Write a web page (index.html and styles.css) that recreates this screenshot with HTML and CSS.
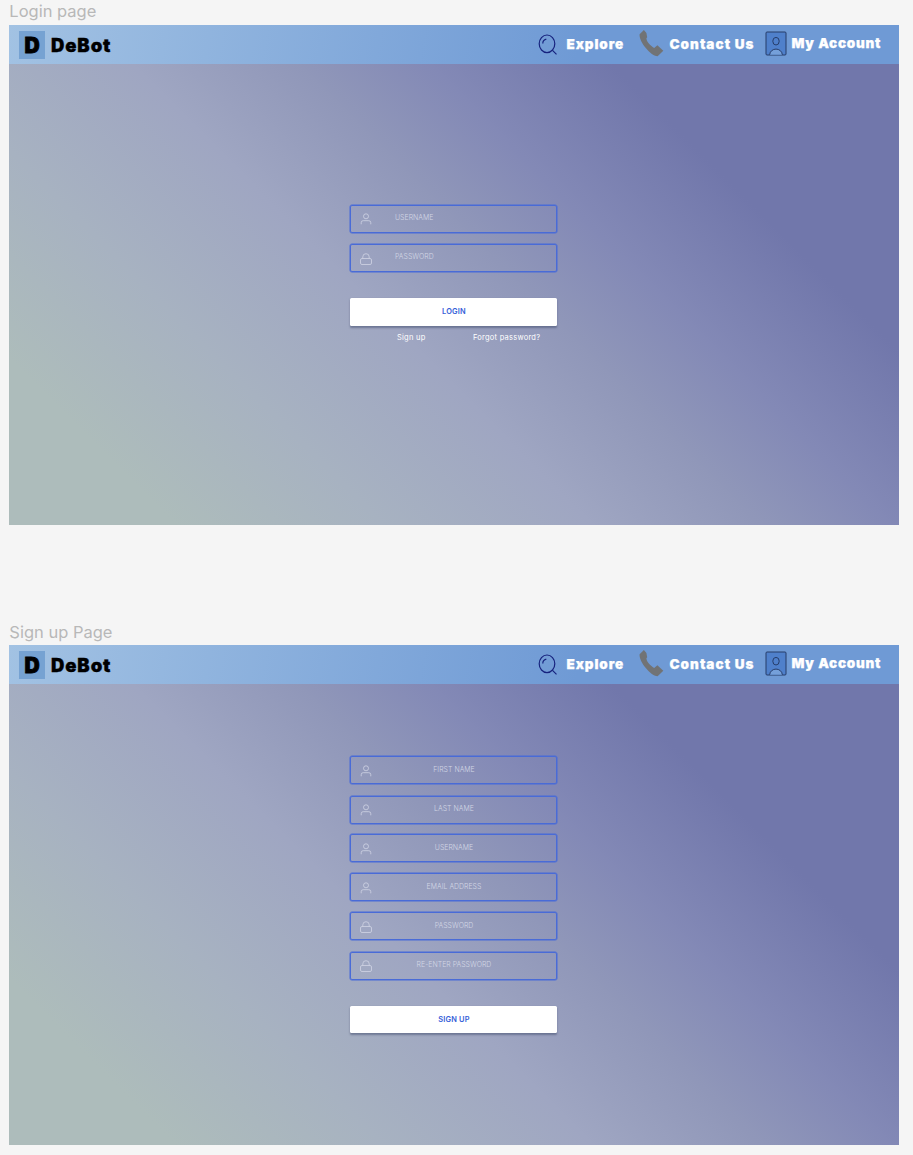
FILE: index.html
```
<!DOCTYPE html>
<html lang="en">
<head>
<meta charset="utf-8">
<title>DeBot</title>
<link rel="stylesheet" href="styles.css">
</head>
<body>
<svg class="defs" width="0" height="0">
  <symbol id="search" viewBox="0 0 20 22"><ellipse cx="9" cy="9.8" rx="7.8" ry="8.8"/><path d="M14.5 16.3l4 4M4.8 9.4c0-2.4 1.2-3.6 3.5-4.2"/></symbol>
  <symbol id="phone" viewBox="0 0 25 28"><path d="M4.900.9L.6 5.200C.2 9 3 14.500 7 19.300 10.500 23.500 14.500 27 18.600 27.200L24.300 21.700 18.400 16.200 15.200 18.900C13.400 18.500 8.300 13.400 7.700 11L7.400 9.300 8.200 8.300 7.400 4Z"/></symbol>
  <symbol id="account" viewBox="0 0 22 25"><rect class="card" x="1" y="1" width="20" height="23" rx="1"/><ellipse cx="11" cy="10.200" rx="3.200" ry="3.800"/><path class="shoulders" d="M4.600 23.800c.8-7.600 12-7.600 12.800 0"/></symbol>
  <symbol id="user" viewBox="0 0 12 12"><circle cx="6" cy="3.300" r="2.500"/><path d="M1.200 11.300V9.700q0-2 2-2h5.600q2 0 2 2v1.600"/></symbol>
  <symbol id="lock" viewBox="0 0 12 12"><rect x=".5" y="5.500" width="11" height="6" rx="1.500"/><path d="M2.800 5.500V3.900a3.200 3.200 0 0 1 6.400 0v1.600"/></symbol>
</svg>
<section class="frame-wrap">
  <h2 class="frame-name">Login page</h2>
  <main class="frame">
    <header class="bar">
      <span class="logo">D</span><span class="brand">DeBot</span>
      <nav class="nav">
        <svg class="i-search"><use href="#search"/></svg><a class="explore">Explore</a>
        <svg class="i-phone"><use href="#phone"/></svg><a class="contact">Contact Us</a>
        <svg class="i-account"><use href="#account"/></svg><a class="my">My Account</a>
      </nav>
    </header>
    <form class="form login">
      <label class="field"><svg class="icon"><use href="#user"/></svg><span class="hint">USERNAME</span></label>
      <label class="field"><svg class="icon"><use href="#lock"/></svg><span class="hint">PASSWORD</span></label>
      <button class="submit" type="button">LOGIN</button>
      <div class="links"><a class="signup-link">Sign up</a><a class="forgot">Forgot password?</a></div>
    </form>
  </main>
</section>
<section class="frame-wrap last">
  <h2 class="frame-name">Sign up Page</h2>
  <main class="frame">
    <header class="bar">
      <span class="logo">D</span><span class="brand">DeBot</span>
      <nav class="nav">
        <svg class="i-search"><use href="#search"/></svg><a class="explore">Explore</a>
        <svg class="i-phone"><use href="#phone"/></svg><a class="contact">Contact Us</a>
        <svg class="i-account"><use href="#account"/></svg><a class="my">My Account</a>
      </nav>
    </header>
    <form class="form signup">
      <label class="field"><svg class="icon"><use href="#user"/></svg><span class="hint">FIRST NAME</span></label>
      <label class="field"><svg class="icon"><use href="#user"/></svg><span class="hint">LAST NAME</span></label>
      <label class="field"><svg class="icon"><use href="#user"/></svg><span class="hint">USERNAME</span></label>
      <label class="field"><svg class="icon"><use href="#user"/></svg><span class="hint">EMAIL ADDRESS</span></label>
      <label class="field"><svg class="icon"><use href="#lock"/></svg><span class="hint">PASSWORD</span></label>
      <label class="field"><svg class="icon"><use href="#lock"/></svg><span class="hint">RE-ENTER PASSWORD</span></label>
      <button class="submit" type="button">SIGN UP</button>
    </form>
  </main>
</section>
</body>
</html>
```
FILE: styles.css
```
* { box-sizing: border-box; }
body { margin: 0; background: #f5f5f5; font-family: Inter, sans-serif; height: 1155px; }
.defs { display: block; height: 0; }
.frame-wrap { padding-left: 9.300px; height: 620.300px; }
.frame-wrap.last { height: 534px; }
.frame-name { margin: 0; height: 24.500px; font-size: 16.500px; line-height: 22px; font-weight: 400; color: #b8b8b8; white-space: nowrap; }
.last .frame-name { padding-top: 1px; }
.frame { width: 889.400px; height: 500px; background: linear-gradient(45deg, #adbcbb 12%, #a7b2c1 27%, #9fa6c2 42%, #9097b9 54%, #8389b6 63.500%, #7177ab 76.5%); }
.bar { height: 39px; padding-left: 9.700px; display: flex; align-items: flex-start; background: linear-gradient(100deg, #a2c2e3, #6f9ad5 64%); color: #000; font-weight: 900; }
.logo { width: 26px; height: 28px; margin-top: 6.500px; background: #76a2d2; text-align: center; font-size: 21px; line-height: 29px; -webkit-text-stroke: .8px #000; }
.brand { margin: 8px 0 0 6px; font-size: 18.500px; line-height: 24px; letter-spacing: .9px; -webkit-text-stroke: .3px #000; }
.nav { margin-left: auto; height: 39px; display: flex; color: #fff; font-size: 13.500px; line-height: 18px; white-space: nowrap; padding-right: 17.200px; -webkit-text-stroke: .25px #fff; }
.nav svg { fill: none; flex: none; }
.nav a { margin-top: 10px; }
.i-search { width: 20px; height: 22px; margin-top: 9px; stroke: #17237e; stroke-width: 1.200; }
.explore { width: 58px; margin-left: 9px; letter-spacing: .9px; }
.nav .i-phone { width: 25px; height: 28px; margin: 4px 0 0 14px; fill: #717375; }
.contact { width: 86px; margin-left: 6px; letter-spacing: 1.030px; }
.i-account { width: 22px; height: 25px; margin: 6.500px 0 0 9px; stroke: #263c69; stroke-width: 1; }
.card { fill: #4f80cb; }
.shoulders { fill: #75a0da; }
.nav .my { width: 90px; margin: 9px 0 0 5px; letter-spacing: .75px; }
.form { width: 207px; margin-left: 341.200px; display: grid; }
.login { padding-top: 141px; grid-template-rows: 28.500px 28.500px 28px 24px; row-gap: 11px; }
.login .submit { margin-top: 14.500px; }
.signup { padding-top: 72.500px; grid-template-rows: 39.500px 38.500px 39.200px 39px 39.400px 54px 28px; }
.field { height: 28px; border: 1px solid #496bd7; box-shadow: 0 0 0 .5px #496bd7; border-radius: 2px; display: flex; align-items: center; position: relative; }
.icon { position: absolute; left: 8.500px; top: 7.500px; width: 12px; height: 12px; fill: none; stroke: #d0d4e4; stroke-width: .8; }
.hint { color: #d3d7e5; font-size: 6.900px; line-height: 10px; font-weight: 300; margin-top: -1.500px; letter-spacing: .04px; }
.login .hint { padding-left: 43.500px; }
.signup .hint { width: 100%; text-align: center; }
.submit { height: 27.500px; border: 0; border-radius: 1.500px; padding: 0 0 1px; background: #fff; color: #3560d8; font: 600 7.400px Inter, sans-serif; letter-spacing: .2px; box-shadow: 0 1.500px 2px #4c567699; }
.links { margin-top: 8px; height: 14px; display: flex; color: #fff; font-size: 7.500px; line-height: 13px; letter-spacing: .24px; white-space: nowrap; }
.signup-link { margin-left: 46.500px; width: 76px; }
```
